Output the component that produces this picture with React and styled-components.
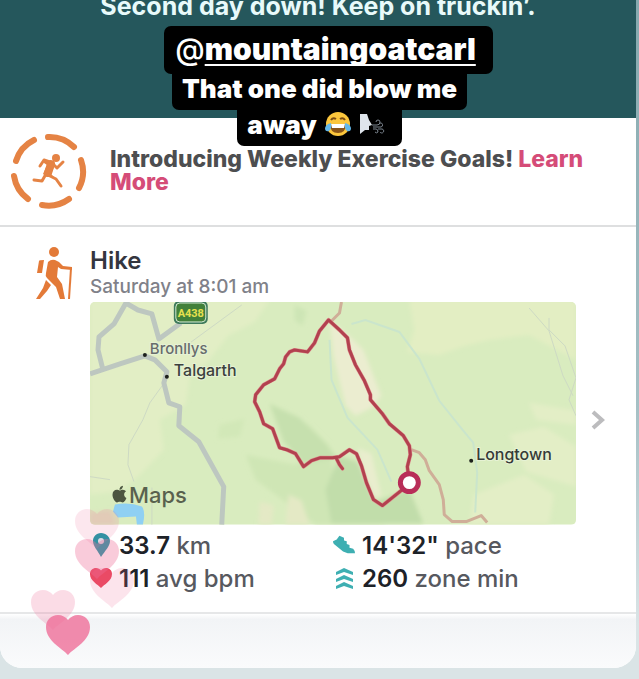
import React from "react"
import styled, { createGlobalStyle } from "styled-components"
import { FaApple } from "react-icons/fa"

const stats = [
    { icon: <PinIcon />, value: "33.7", unit: "km" },
    { icon: <ShoeIcon />, value: `14'32"`, unit: "pace" },
    { icon: <HeartIcon color="#e9425a" />, value: "111", unit: "avg bpm" },
    { icon: <ZoneIcon />, value: "260", unit: "zone min" },
]

const hearts = [
    { left: 75, top: 509, opacity: 0.16 },
    { left: 75, top: 539, opacity: 0.36 },
    { left: 90, top: 568, opacity: 0.18 },
    { left: 31, top: 590, opacity: 0.24 },
    { left: 46, top: 615, opacity: 0.8 },
]

function App() {
    return (
        <Page>
            <GlobalStyle />
            <Card>
                <Banner>
                    <BannerText>Second day down! Keep on truckin’.</BannerText>
                </Banner>
                <Intro>
                    <GoalIcon />
                    <IntroText>
                        Introducing Weekly Exercise Goals! <a href="#learn">Learn More</a>
                    </IntroText>
                </Intro>
                <Activity>
                    <HikeIcon />
                    <Details>
                        <Title>Hike</Title>
                        <Subtitle>Saturday at 8:01 am</Subtitle>
                        <RouteMap />
                        <Stats>
                            {stats.map((stat) => (
                                <Stat key={stat.unit}>
                                    <StatIcon>{stat.icon}</StatIcon>
                                    <span><strong>{stat.value}</strong> {stat.unit}</span>
                                </Stat>
                            ))}
                        </Stats>
                    </Details>
                    <OpenButton aria-label="Open hike">
                        <svg width="16" height="22" viewBox="0 0 16 22" fill="none" stroke="#bcbcbe" strokeWidth="4">
                            <path d="M3 3l9 8-9 8" />
                        </svg>
                    </OpenButton>
                </Activity>
                <Footer />
            </Card>
            <Caption>
                <Mention>@<a href="#mountaingoatcarl">mountaingoatcarl</a></Mention>
                <CaptionLine>That one did blow me</CaptionLine>
                <CaptionLine $last>
                    away <JoyEmoji /> <WindEmoji />
                </CaptionLine>
            </Caption>
            {hearts.map((heart) => (
                <FloatingHeart key={heart.top} $left={heart.left} $top={heart.top} $opacity={heart.opacity}>
                    <HeartIcon color="#f0709a" />
                </FloatingHeart>
            ))}
        </Page>
    )
}

export default App

function RouteMap() {
    return (
        <MapSvg viewBox="0 2 487 223" role="img" aria-label="Route map">
            <defs>
                <filter id="soft"><feGaussianBlur stdDeviation="2" /></filter>
            </defs>
            <rect y="2" width="487" height="223" fill="#d9ecbf" />
            <g filter="url(#soft)">
                <path d="M0 0H180L165 22 138 36 118 62 100 76 96 105 70 120 74 150 50 175 30 192 0 195z" fill="#e2eec5" />
                <path d="M320 0H487V60L440 35 400 40 375 46 350 55 318 52 325 30z" fill="#e3eec3" />
                <path d="M440 103l47 8v14l-40-5zM420 135l35-8 32 20v40l-50-15zM385 195l50-20 30 20-5 30h-80z" fill="#e3eec6" />
                <path d="M180 104l40 22 20 20 6 45 50 34h-70l-60-45-10-25 50 10 10-8-25-25z" fill="#cfe6b5" />
                <path d="M180 104l30 14 24 24 14 16-34 6-20-22z" fill="#c6e0ae" />
                <path d="M236 190l14-34 18 6 18 40 34-12 14 34h-92z" fill="#c1ddaa" />
                <path d="M240 20l22 18 12 12 10 26 8 20-10 12-16 8-10-10-12-50z" fill="#ebedd0" />
                <path d="M268 148l14 6 10 42-8 2-8-18z" fill="#e9edce" />
                <path d="M170 202l14 4-2 19h-13zM199 195l13 6 8 24h-24z" fill="#e4e9c5" />
                <path d="M0 213l20-2 6 14H0z" fill="#e0ddbd" />
                <path d="M205 5l12 6-4 15-8-6z" fill="#cde5b5" />
                <path d="M130 125l25-6-5 18-22 2z" fill="#d2e8b8" />
            </g>
            <path d="M25 205q14-3 27 2 4 5 1 18h-6l-1-8-18 1-5-6z" fill="#8fd0f3" />
            <g fill="none" stroke="#cdd9c4" strokeWidth="1">
                <path d="M73 85L60 103 53 120 39 145 38 165 44 182M152 5L96 46M0 177l20 3M62 188v37" />
                <path d="M440 8l20 23 14 45 10 20M460 18v12l16 16 11 32-7 22 7 16" />
            </g>
            <g fill="none" stroke="#cae5cc" strokeWidth="2">
                <path d="M262 24l14-4 34 12 20 27 20 42 24 30 10 12 4 30-2 40M240 40l2 40 16 38 30 32 14 32" />
            </g>
            <g fill="none" stroke="#bdc7c0" strokeWidth="5" strokeLinejoin="round">
                <path d="M0 74L12 70 30 64 55 56 65 60 77 72 74 83 79 103 90 107 89 126 109 142 134 187 132 225" />
                <path d="M13 70L8 50 9 37 24 24 36 3 48 10 62 14 69 39 91 23" />
            </g>
            <g fill="none" stroke="#cfae98" strokeWidth="3" strokeLinejoin="round">
                <path d="M252 2l-2 11-9 9M322 150l8 3 6 7 4 11 10 14 4 15 1 15 8 7 14 0 15-6 6 7" />
            </g>
            <g fill="none" strokeLinejoin="round" strokeLinecap="round">
                <path d={routePath} stroke="#dd8f8e" strokeWidth="4" />
                <path d={routePath} stroke="#b2414f" strokeWidth="3" />
            </g>
            <circle cx="320" cy="183" r="9" fill="#fff" stroke="#b82d58" strokeWidth="5" />
            <rect x="84" y="1" width="34" height="23" rx="5" fill="#3e7a5c" />
            <rect x="86" y="3" width="30" height="19" rx="4" fill="#41803a" stroke="#d6ead4" strokeWidth="1" />
            <RoadLabel x="101" y="17">A438</RoadLabel>
            <g fill="#1d211c">
                <circle cx="55" cy="55" r="2" />
                <circle cx="77" cy="77" r="2" />
                <circle cx="382" cy="161" r="2" />
            </g>
            <PlaceLabel x="60" y="54" fill="#686c6c">Bronllys</PlaceLabel>
            <PlaceLabel x="84" y="76" fill="#3c413d" $town>Talgarth</PlaceLabel>
            <PlaceLabel x="387" y="160" fill="#363b38" $town>Longtown</PlaceLabel>
            <FaApple x="20" y="185" size={19} color="#4b5440" />
            <MapsLabel x="39" y="203">Maps</MapsLabel>
        </MapSvg>
    )
}

const routePath =
    "M239 20L230 31 225 43 218 52 205 50 200 52 196 57 194 64 190 69 185 79 174 85 166 95 165 102 170 112 174 124 183 129 190 148 197 150 206 154 214 167 222 161 231 158 243 158 250 157 260 150 267 154 272 166 277 183 284 200 293 206 303 198 313 190 320 183 318 167 321 155 320 146 314 136 300 124 293 114 281 100 281 95 275 81 266 65 260 50 258 38 250 30zM247 159l3 6 3 4"

function GoalIcon() {
    return (
        <svg width="78" height="78" viewBox="0 0 78 78" fill="none" aria-hidden="true">
            <g stroke="#e58344" strokeWidth="6" strokeLinecap="round">
                <path d="M38 5A35 35 0 0 1 64 15" />
                <path d="M71 28A35 35 0 0 1 69 56" />
                <path d="M59 67A35 35 0 0 1 32 73" />
                <path d="M18 67A35 35 0 0 1 4 44" />
                <path d="M6 29A35 35 0 0 1 24 8" />
            </g>
            <g fill="#e58344">
                <circle cx="46" cy="26" r="4" />
                <path d="M34 28l8 2 3 3-4 9 3 3-7 0-4-3 4-9-3-2z" />
            </g>
            <g stroke="#e58344" strokeWidth="3" strokeLinecap="round" strokeLinejoin="round">
                <path d="M41 32L38 41" strokeWidth="8" />
                <path d="M40 30L34 28 30 34M43 32L47 36 53 30" />
                <path d="M38 43L46 47 51 54M36 42L32 49 24 48" />
            </g>
        </svg>
    )
}

function HikeIcon() {
    return (
        <svg width="40" height="54" viewBox="0 0 40 54" fill="#e37a38" aria-hidden="true">
            <circle cx="20" cy="6" r="5" />
            <path d="M5 15q0-1 5-1L8 27H3z" />
            <path d="M14 16q3-3 7-2l4 2 4 4 9 1v3l-11-1-3-2-1 10 5 7 3 15h-5l-4-12-9-9q-2-2-1-5z" />
            <path d="M12 34l5 5-4 6-7 8H2l7-11z" />
            <path d="M36 22h2l-2 31h-2z" />
        </svg>
    )
}

function PinIcon() {
    return (
        <svg width="17" height="24" viewBox="0 0 17 24" aria-hidden="true">
            <path d="M8 0C3 0 0 4 0 8c0 5 5 10 8 16 4-6 9-11 9-16 0-4-4-8-9-8z" fill="#0f98a4" />
            <circle cx="8" cy="8" r="3" fill="#d8eef2" />
        </svg>
    )
}

function ShoeIcon() {
    return (
        <svg width="24" height="20" viewBox="0 0 24 20" aria-hidden="true">
            <path d="M0 6L4 4 7 0l5 2v3l3 1v3l3 1v3l4 1q2 2 2 5h-8l-5-2L1 9Q0 8 0 6z" fill="#3eafb2" />
        </svg>
    )
}

function HeartIcon({ color }) {
    return (
        <svg viewBox="0 0 44 40" fill={color} aria-hidden="true">
            <path d="M22 40C16 33 0 26 0 12 0 5 5 0 12 0c4 0 8 2 10 5 2-3 6-5 10-5 7 0 12 5 12 12 0 14-16 21-22 28z" />
        </svg>
    )
}

function ZoneIcon() {
    return (
        <svg width="17" height="21" viewBox="0 0 17 21" fill="#3eafb2" aria-hidden="true">
            <path d="M0 4l8-4 9 4v3L8 4 0 7zM0 11l8-4 9 4v3l-9-3-8 3zM0 18l8-4 9 4v3l-9-3-8 3z" />
        </svg>
    )
}

function JoyEmoji() {
    return (
        <Emoji viewBox="0 0 26 26" role="img" aria-label="tears of joy">
            <circle cx="13" cy="13" r="12" fill="#fbc63c" />
            <path d="M6 9q2-3 5-1M15 8q3-2 5 1" stroke="#7a4a12" strokeWidth="2" fill="none" />
            <path d="M5 13h16q0 9-8 9t-8-9z" fill="#8a5418" />
            <path d="M6 13h14l-1 4H7z" fill="#fff" />
            <path d="M6 12q-5 1-6 5 0 4 4 3 3-3 2-8zM20 12q5 1 6 5 0 4-4 3-3-3-2-8z" fill="#62b8ea" />
        </Emoji>
    )
}

function WindEmoji() {
    return (
        <Emoji viewBox="0 0 26 26" role="img" aria-label="wind blowing face">
            <path d="M1 3h7l2 6 3 5-3 1v4H6l-5 4z" fill="#dfe5ec" />
            <g stroke="#7d8690" strokeWidth="1" fill="none">
                <path d="M13 14h5q3 0 3-3a2 2 0 0 0-4 0M14 16h8a2 2 0 1 0-1-4M14 18h3q2 0 2 3a2 2 0 0 1-3 0M19 18h4a2 2 0 1 1-2 3" />
            </g>
        </Emoji>
    )
}

const GlobalStyle = createGlobalStyle`
    body {
        margin: 0;
        background-color: #dae4e6;
        font-family: Inter, "Liberation Sans", sans-serif;
    }
    * {
        box-sizing: border-box;
    }
    a {
        color: inherit;
    }
`
const Page = styled.div`
    position: relative;
    min-height: 100vh;
    padding: 0 3px 12px 0;
    background: linear-gradient(#86a9af, #a6c0c5 60%, #dae4e6 92%);
    overflow: hidden;
`
const Card = styled.main`
    background-color: #fff;
    border-radius: 0 0 22px 22px;
    overflow: hidden;
`
const Banner = styled.header`
    height: 118px;
    overflow: hidden;
    background-color: #25575c;
    color: #e8fafa;
    text-align: center;
`
const BannerText = styled.p`
    margin: -7px 0 0;
    font-size: 25px;
    line-height: 26px;
    font-weight: 700;
`
const Intro = styled.section`
    display: flex;
    align-items: center;
    gap: 22px;
    padding: 14px 40px 15px 10px;
    border-bottom: 2px solid #dedfe0;
    svg {
        flex: none;
    }
`
const IntroText = styled.p`
    margin: 0;
    font-size: 23px;
    line-height: 23px;
    font-weight: 800;
    color: #4d4e50;
    a {
        color: #d54c78;
        text-decoration: none;
    }
`
const Activity = styled.section`
    display: grid;
    grid-template-columns: 90px 1fr 60px;
    align-items: start;
    padding: 19px 0 17px;
    border-bottom: 2px solid #e6e7e8;
    > svg {
        margin-left: 34px;
    }
`
const Details = styled.div`
    min-width: 0;
`
const Title = styled.h2`
    margin: 0;
    font-size: 24px;
    line-height: 30px;
    font-weight: 600;
    color: #34363f;
`
const Subtitle = styled.p`
    margin: 0 0 5px;
    font-size: 19px;
    line-height: 21px;
    font-weight: 500;
    color: #808189;
`
const MapSvg = styled.svg`
    display: block;
    width: 100%;
    border-radius: 5px;
`
const PlaceLabel = styled.text`
    font-size: ${(props) => (props.$town ? 16 : 15)}px;
    font-weight: 500;
    paint-order: stroke;
    stroke: #e6f2d4;
    stroke-width: 2px;
`
const RoadLabel = styled.text`
    font-family: Roboto, sans-serif;
    font-size: 11px;
    font-weight: 700;
    text-anchor: middle;
    fill: #e7e04e;
`
const MapsLabel = styled.text`
    font-size: 22px;
    font-weight: 500;
    fill: #59614e;
`
const Stats = styled.div`
    display: grid;
    grid-template-columns: 1fr 1fr;
    padding-top: 4px;
`
const Stat = styled.div`
    display: flex;
    align-items: center;
    height: 33px;
    font-size: 24px;
    font-weight: 500;
    color: #57595f;
    white-space: nowrap;
    strong {
        font-weight: 600;
        color: #1d2228;
    }
`
const StatIcon = styled.span`
    display: flex;
    justify-content: center;
    width: 22px;
    margin-right: 7px;
`
const OpenButton = styled.button`
    align-self: center;
    margin-left: 14px;
    padding: 0;
    border: none;
    background: none;
    line-height: 0;
    text-align: left;
`
const Footer = styled.footer`
    height: 54px;
    background: linear-gradient(#fff, #f2f4f6 10%, #fafbfc);
`
const Caption = styled.div`
    position: absolute;
    top: 26px;
    left: 0;
    right: 0;
    display: flex;
    flex-direction: column;
    align-items: center;
    color: #fff;
`
const CaptionLine = styled.p`
    display: flex;
    align-items: center;
    gap: 8px;
    margin: 0;
    height: 36px;
    padding: ${(props) => (props.$last ? "0 17px 8px 10px" : "0 10px 8px")};
    background-color: #000;
    border-radius: 0 0 7px 7px;
    font-size: 26px;
    font-weight: 900;
    white-space: nowrap;
`
const Mention = styled.p`
    margin: 0 0 0 18px;
    height: 48px;
    padding: 0 17px 0 11px;
    background-color: #000;
    border-radius: 7px;
    font-size: 30px;
    line-height: 46px;
    font-weight: 500;
    a {
        font-weight: 900;
        text-decoration-thickness: 2px;
        text-underline-offset: 4px;
        text-decoration-skip-ink: none;
    }
`
const Emoji = styled.svg`
    width: 26px;
    height: 26px;
`
const FloatingHeart = styled.span`
    position: absolute;
    left: ${(props) => props.$left}px;
    top: ${(props) => props.$top}px;
    width: 44px;
    height: 40px;
    opacity: ${(props) => props.$opacity};
    pointer-events: none;
`
